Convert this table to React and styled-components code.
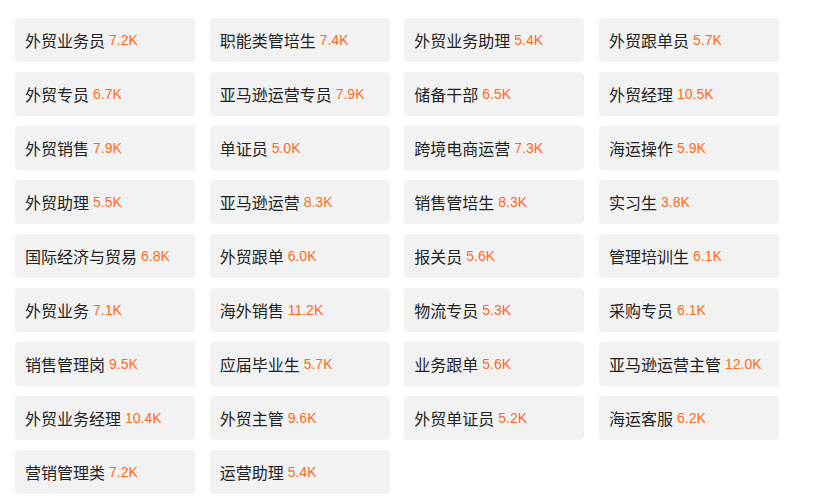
import React from 'react'
import styled, { createGlobalStyle } from 'styled-components'

const jobs = [
  ['外贸业务员', '7.2K'], ['职能类管培生', '7.4K'], ['外贸业务助理', '5.4K'], ['外贸跟单员', '5.7K'],
  ['外贸专员', '6.7K'], ['亚马逊运营专员', '7.9K'], ['储备干部', '6.5K'], ['外贸经理', '10.5K'],
  ['外贸销售', '7.9K'], ['单证员', '5.0K'], ['跨境电商运营', '7.3K'], ['海运操作', '5.9K'],
  ['外贸助理', '5.5K'], ['亚马逊运营', '8.3K'], ['销售管培生', '8.3K'], ['实习生', '3.8K'],
  ['国际经济与贸易', '6.8K'], ['外贸跟单', '6.0K'], ['报关员', '5.6K'], ['管理培训生', '6.1K'],
  ['外贸业务', '7.1K'], ['海外销售', '11.2K'], ['物流专员', '5.3K'], ['采购专员', '6.1K'],
  ['销售管理岗', '9.5K'], ['应届毕业生', '5.7K'], ['业务跟单', '5.6K'], ['亚马逊运营主管', '12.0K'],
  ['外贸业务经理', '10.4K'], ['外贸主管', '9.6K'], ['外贸单证员', '5.2K'], ['海运客服', '6.2K'],
  ['营销管理类', '7.2K'], ['运营助理', '5.4K'],
]

const Global = createGlobalStyle`
  body {
    margin: 0;
    background: #fff;
    font-family: "Liberation Sans", "Noto Sans CJK SC", sans-serif;
  }
`

const Grid = styled.ul`
  list-style: none;
  margin: 0;
  padding: 18px 0 0 15px;
  display: grid;
  grid-template-columns: repeat(4, 180px);
  column-gap: 14.67px;
  row-gap: 10px;
`

const Item = styled.li`
  height: 44px;
  display: flex;
  align-items: center;
  padding-left: 10px;
  background: #f2f2f2;
  border-radius: 4px;
  white-space: nowrap;
`

const Title = styled.span`
  font-size: 16px;
  color: #222;
`

const Salary = styled.span`
  margin-left: 4px;
  font-size: 14px;
  color: #ff6a1c;
`

export default function App() {
  return (
    <>
      <Global />
      <Grid>
        {jobs.map(([name, pay]) => (
          <Item key={name}>
            <Title>{name}</Title>
            <Salary>{pay}</Salary>
          </Item>
        ))}
      </Grid>
    </>
  )
}
